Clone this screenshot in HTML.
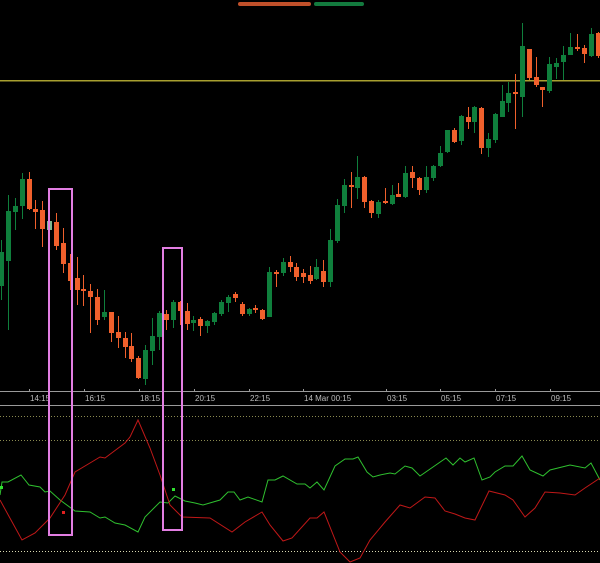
<!DOCTYPE html>
<html><head><meta charset="utf-8"><style>
html,body{margin:0;padding:0;background:#000;width:600px;height:563px;overflow:hidden}
svg{display:block}
text{font-family:"Liberation Sans",sans-serif;font-size:8px;fill:#bdbdbd}
</style></head><body>
<svg id="s" width="600" height="563" xmlns="http://www.w3.org/2000/svg">
<rect width="600" height="563" fill="#000"/>
<rect x="238" y="2" width="73" height="4" rx="2" fill="#c0502a"/>
<rect x="314" y="2" width="50" height="4" rx="2" fill="#137a3e"/>
<rect x="0" y="80" width="600" height="1.5" fill="#a8a030"/>
<g id="c"></g>
<line x1="0" y1="391.5" x2="600" y2="391.5" stroke="#9a9a9a"/>
<line x1="0" y1="405.5" x2="600" y2="405.5" stroke="#9a9a9a"/>
<g stroke="#9a9a9a">
<line x1="29.5" y1="389" x2="29.5" y2="392"/><line x1="84.5" y1="389" x2="84.5" y2="392"/><line x1="139.5" y1="389" x2="139.5" y2="392"/><line x1="194.5" y1="389" x2="194.5" y2="392"/><line x1="249.5" y1="389" x2="249.5" y2="392"/><line x1="303.5" y1="389" x2="303.5" y2="392"/><line x1="386.5" y1="389" x2="386.5" y2="392"/><line x1="440.5" y1="389" x2="440.5" y2="392"/><line x1="495.5" y1="389" x2="495.5" y2="392"/><line x1="550.5" y1="389" x2="550.5" y2="392"/>
</g>
<text x="30" y="401">14:15</text><text x="85" y="401">16:15</text><text x="140" y="401">18:15</text><text x="195" y="401">20:15</text><text x="250" y="401">22:15</text><text x="304" y="401">14 Mar 00:15</text><text x="387" y="401">03:15</text><text x="441" y="401">05:15</text><text x="496" y="401">07:15</text><text x="551" y="401">09:15</text>
<line x1="0" y1="416.5" x2="600" y2="416.5" stroke="#8a8a50" stroke-dasharray="1,2"/>
<line x1="0" y1="440.5" x2="600" y2="440.5" stroke="#8a8a50" stroke-dasharray="1,2"/>
<line x1="0" y1="551.5" x2="600" y2="551.5" stroke="#d8d8b0" stroke-dasharray="1,2"/>
<polyline fill="none" stroke="#2fc02f" stroke-width="1" points="0,495 2,482 8,482 21,475 29,485 40,487 45,492 50,491 60,500 75,511 90,512 100,518 105,517 115,523 125,525 138,532 145,517 160,502 168,503 175,496 185,501 195,503 203,505 220,500 228,492 234,492 240,500 248,497 262,502 268,480 275,480 283,476 297,484 305,484 310,488 317,482 324,490 335,466 345,459 353,459 358,457 367,472 373,477 380,475 390,473 395,474 405,466 412,468 420,476 446,458 453,465 460,458 465,462 474,458 482,480 490,477 495,472 505,466 513,466 522,456 530,470 543,476 550,470 570,465 585,468 591,463 600,480"/>
<polyline fill="none" stroke="#c01818" stroke-width="1" points="0,500 22,540 35,533 50,518 65,495 75,472 90,463 100,457 105,458 125,443 130,437 138,420 150,448 160,475 170,505 182,517 210,518 232,532 245,522 262,512 270,525 283,541 292,538 310,518 317,518 324,512 340,552 350,562 360,558 370,540 385,522 400,505 410,508 425,497 435,498 445,511 455,514 465,518 475,520 489,491 505,495 513,500 525,517 535,508 545,492 560,493 575,495 585,488 600,478"/>
<rect x="0" y="486" width="3" height="3" fill="#2fe02f"/>
<rect x="62" y="511" width="3" height="3" fill="#e02020"/>
<rect x="172" y="488" width="3" height="3" fill="#2fe02f"/>
<rect x="49" y="189" width="23" height="346" fill="none" stroke="#e27ee2" stroke-width="2"/>
<rect x="163" y="248" width="19" height="282" fill="none" stroke="#e27ee2" stroke-width="2"/>
</svg>
<script>
var R="#f0602c",G="#0f7f3c";
var d=[[1,252,286,240,300,G],[8,211,261,195,330,G],[15,206,212,198,230,G],[22,179,206,173,219,G],[29,179,209,172,210,R],[35,209,212,200,229,R],[42,210,229,201,247,R],[49,221,230,218,232,"#7fb890"],[56,222,246,213,250,R],[63,243,264,228,273,R],[70,263,281,254,290,R],[77,278,290,257,305,R],[83,289,291,275,306,R],[90,291,297,284,333,R],[97,297,320,289,325,R],[104,312,317,290,320,G],[111,312,333,312,342,R],[118,332,338,316,348,R],[125,338,347,332,358,R],[131,346,359,333,362,R],[138,358,378,356,379,R],[145,350,379,345,385,G],[152,336,351,318,365,G],[159,313,337,311,350,G],[166,314,320,310,330,R],[173,302,320,300,328,G],[180,302,311,301,325,R],[187,311,324,303,330,R],[193,320,323,316,331,G],[200,319,326,317,336,R],[207,321,326,320,333,G],[214,313,322,312,325,G],[221,302,314,300,316,G],[228,297,303,295,312,G],[235,294,298,292,302,R],[242,304,314,302,316,R],[249,309,314,308,316,G],[255,308,310,305,313,R],[262,310,319,309,320,R],[269,272,317,267,317,G],[276,272,274,270,287,R],[283,262,273,258,276,G],[290,262,267,256,272,R],[296,267,277,263,281,R],[303,273,277,269,283,R],[310,275,281,266,284,R],[316,267,279,259,280,G],[323,271,282,260,287,R],[330,240,282,229,287,G],[337,205,241,199,243,G],[344,185,206,179,213,G],[351,185,187,172,208,R],[357,177,188,156,199,G],[364,177,202,176,208,R],[371,201,213,200,218,R],[378,202,214,200,218,G],[385,201,203,188,204,R],[392,195,204,185,205,G],[398,194,197,183,197,R],[405,173,197,166,198,G],[412,172,178,166,188,R],[419,178,190,177,195,R],[426,177,190,166,193,G],[433,166,178,165,181,G],[440,153,166,146,167,G],[447,130,152,130,153,G],[454,130,142,128,143,R],[461,116,141,115,145,G],[468,117,122,107,129,R],[474,107,122,106,133,G],[481,108,148,107,154,R],[488,139,148,133,157,G],[495,114,140,113,143,G],[502,101,117,85,117,G],[508,93,103,82,112,G],[515,92,93,74,129,R],[522,46,97,23,117,G],[529,49,78,49,80,R],[536,77,85,57,87,R],[542,87,90,87,107,R],[549,64,91,57,93,G],[556,63,67,58,79,G],[563,55,62,46,80,G],[570,47,55,33,55,G],[577,47,48,34,51,R],[584,48,54,45,63,R],[591,34,56,28,57,G],[598,33,56,32,58,R]];
var s="";d.forEach(function(c){s+='<line x1="'+(c[0]+0.5)+'" y1="'+c[3]+'" x2="'+(c[0]+0.5)+'" y2="'+c[4]+'" stroke="'+c[5]+'"/>';s+='<rect x="'+(c[0]-2)+'" y="'+c[1]+'" width="5" height="'+Math.max(2,c[2]-c[1])+'" fill="'+c[5]+'"/>';});
document.getElementById("c").innerHTML=s;
</script>
</body></html>
